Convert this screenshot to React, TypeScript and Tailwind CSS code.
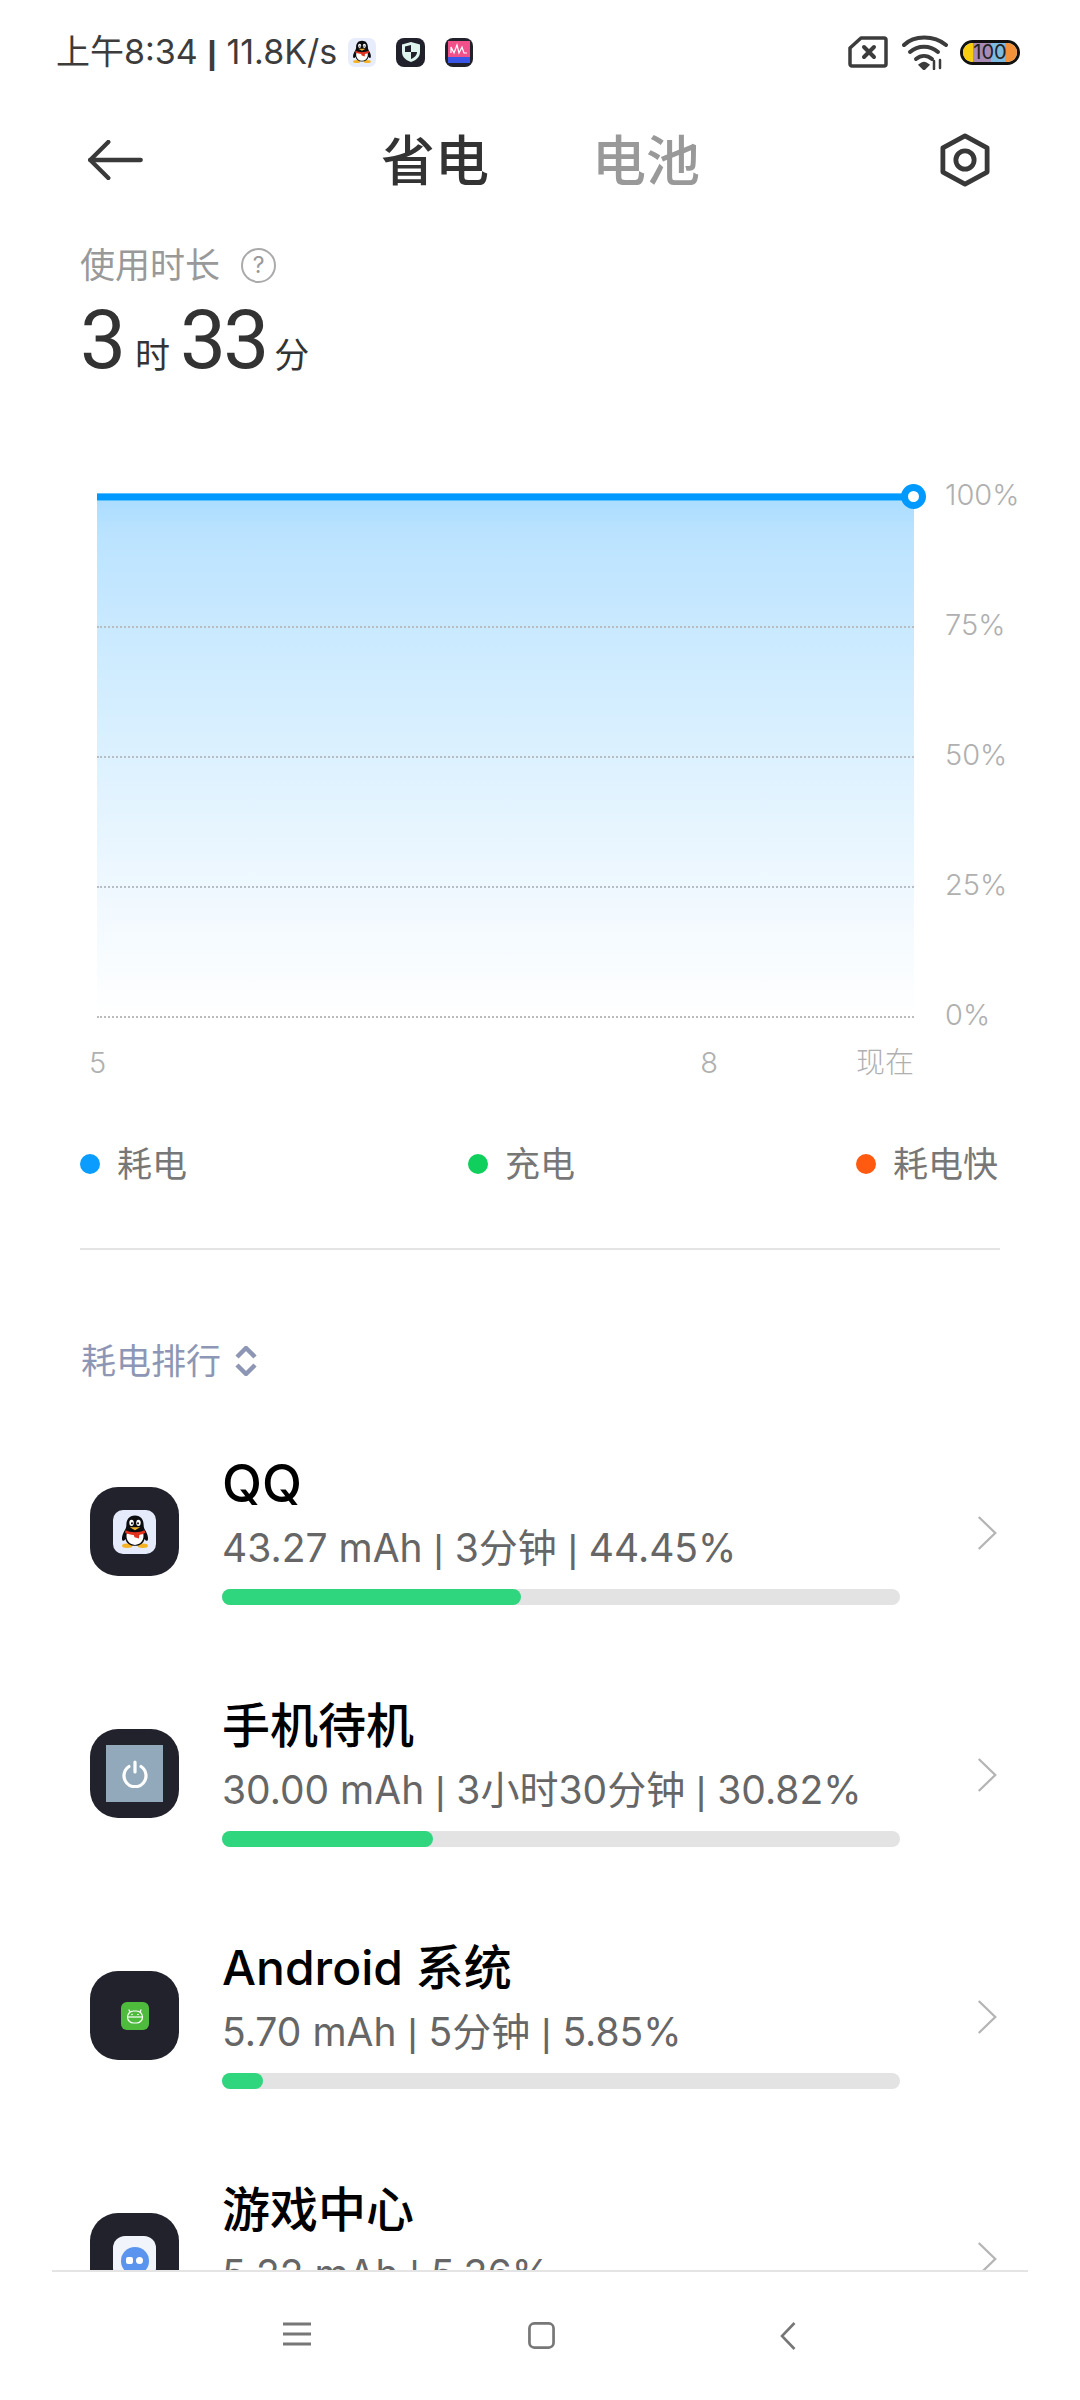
const rows = [
  { title: 'QQ', detail: ['43.27 mAh', '3分钟', '44.45%'], fill: 299, icon: 'qq', titleClass: 'text-[52px]' },
  { title: '手机待机', detail: ['30.00 mAh', '3小时30分钟', '30.82%'], fill: 211, icon: 'power', titleClass: 'text-[48px]' },
  { title: 'Android 系统', detail: ['5.70 mAh', '5分钟', '5.85%'], fill: 41, icon: 'android', titleClass: 'text-[48px]' },
  { title: '游戏中心', detail: ['5.22 mAh', '5.36%'], fill: 36, icon: 'game', titleClass: 'text-[48px]' },
];

function Penguin({ className }: { className?: string }) {
  return (
    <svg viewBox="0 0 44 44" className={className}>
      <ellipse cx="13" cy="38" rx="6" ry="2.6" fill="#f5b324" />
      <ellipse cx="31" cy="38" rx="6" ry="2.6" fill="#f5b324" />
      <path d="M22 3c-7 0-10 5-10 11 0 3-1 5-3 8-2 4-3 9-1 10 1 .6 2-.5 3-2 1 5 5 8 11 8s10-3 11-8c1 1.500 2 2.600 3 2 2-1 1-6-1-10-2-3-3-5-3-8 0-6-3-11-10-11z" fill="#0c0c10" />
      <path d="M13 22c3 2 15 2 18 0 2 5 1 14-9 15-10-1-11-10-9-15z" fill="#fff" />
      <ellipse cx="18" cy="11.500" rx="2.600" ry="3.600" fill="#fff" />
      <ellipse cx="26" cy="11.500" rx="2.600" ry="3.600" fill="#fff" />
      <circle cx="18.500" cy="12" r="1.200" fill="#111" />
      <circle cx="25.500" cy="12" r="1.200" fill="#111" />
      <path d="M16 16.500h12l-6 3.500z" fill="#f5b324" />
      <path d="M11 20c5 3 17 3 22 0l1 3c-2 1.500-5 2-7 2.500l-.5 4-5-1.500-1-2.500c-3 0-7-1-10-2.500z" fill="#e2331f" />
    </svg>
  );
}

function AppIcon({ kind }: { kind: string }) {
  return (
    <div className="mt-[77px] flex h-[89px] w-[89px] shrink-0 items-center justify-center rounded-[28px] bg-[#21222c]">
      {kind === 'qq' && (
        <div className="flex h-[44px] w-[43px] items-center justify-center rounded-[10px] bg-[#e6ebfb]">
          <Penguin className="h-[38px] w-[38px]" />
        </div>
      )}
      {kind === 'power' && (
        <div className="flex h-[57px] w-[57px] items-center justify-center bg-[#91a9bb]">
          <svg viewBox="0 0 28 28" className="h-[28px] w-[28px]" fill="none" stroke="#fff" strokeWidth="3.200" strokeLinecap="round">
            <path d="M14 2v10" />
            <path d="M8 6.500a11 11 0 1 0 12 0" />
          </svg>
        </div>
      )}
      {kind === 'android' && (
        <div className="flex h-[28px] w-[28px] items-center justify-center rounded-[6px] bg-[#4fbb3d]">
          <svg viewBox="0 0 20 20" className="h-[20px] w-[20px]" fill="none" stroke="#fff" strokeWidth="1.200">
            <path d="M5 6 3.800 3.500M15 6l1.200-2.500" />
            <rect x="2.500" y="5" width="15" height="12" rx="6" />
            <path d="M2.500 11h15" />
            <circle cx="7" cy="8.500" r=".8" fill="#fff" stroke="none" />
            <circle cx="13" cy="8.500" r=".8" fill="#fff" stroke="none" />
          </svg>
        </div>
      )}
      {kind === 'game' && (
        <div className="flex h-[44px] w-[43px] items-start justify-center rounded-[12px] bg-[#f1f4fb] pt-[11px]">
          <div className="flex h-[28px] w-[28px] items-center justify-center gap-[3px] rounded-full bg-[#5b94ee]">
            <span className="h-[7px] w-[7px] rounded-[2px] bg-white" />
            <span className="h-[7px] w-[7px] rounded-full bg-white" />
          </div>
        </div>
      )}
    </div>
  );
}

function UsageRow({ title, detail, fill, icon, titleClass }: { title: string; detail: string[]; fill: number; icon: string; titleClass: string }) {
  return (
    <div className="flex h-[242px] shrink-0 pl-[90px] pr-[82px]">
      <AppIcon kind={icon} />
      <div className="ml-[43px] w-[678px] pt-[46px]">
        <div className={`h-[56px] leading-[56px] font-medium text-black ${titleClass}`}>{title}</div>
        <div className="mt-[8px] h-[56px] text-[39px] leading-[56px] text-[#666]">
          {detail.map((part, i) => (
            <span key={part}>
              {i > 0 && (
                <>
                  {' '}
                  <span className="font-['Liberation_Sans']">|</span>{' '}
                </>
              )}
              {part}
            </span>
          ))}
        </div>
        <div className="mt-[13px] h-[16px] w-[678px] rounded-full bg-[#e3e3e3]">
          <div className="h-[16px] rounded-full bg-[#2fd67e]" style={{ width: fill }} />
        </div>
      </div>
      <svg viewBox="0 0 24 38" className="mt-[104px] ml-[76px] h-[38px] w-[24px]" fill="none" stroke="#b5b5b5" strokeWidth="2.500">
        <path d="M3 1.500 21 19 3 36.500" />
      </svg>
    </div>
  );
}

function Legend({ color, label }: { color: string; label: string }) {
  return (
    <div className="flex items-center gap-[17px]">
      <span className={`h-[20px] w-[20px] rounded-full ${color}`} />
      <span className="text-[35px] leading-[44px] text-[#777]">{label}</span>
    </div>
  );
}

export default function App() {
  return (
    <div className="flex h-[2400px] w-[1080px] flex-col overflow-hidden bg-white font-['Inter','Noto_Sans_CJK_SC',sans-serif]">
      <div className="flex h-[104px] shrink-0 items-center pl-[56px] pr-[60px]">
        <span className="text-[34px] leading-[44px] text-[#3c3c3c]">
          上午8:34 <span className="font-['Liberation_Sans'] font-bold">|</span> 11.8K/s
        </span>
        <div className="ml-[11px] flex h-[29px] w-[28px] items-center justify-center rounded-[7px] bg-[#e8edfb]">
          <Penguin className="h-[26px] w-[26px]" />
        </div>
        <div className="ml-[20px] flex h-[29px] w-[29px] items-center justify-center rounded-[8px] bg-[#20212b]">
          <svg viewBox="0 0 20 22" className="h-[22px] w-[20px]">
            <path d="M10 1 19 3.500V11c0 5-4 8.500-9 10-5-1.500-9-5-9-10V3.500z" fill="#dff6ef" />
            <path d="M10 4v7H4V5.500zM10 11h6c0 3.500-2.500 5.500-6 7z" fill="#20212b" />
          </svg>
        </div>
        <div className="ml-[20px] flex h-[29px] w-[28px] items-center justify-center rounded-[8px] bg-[#20212b]">
          <svg viewBox="0 0 22 22" className="h-[22px] w-[22px]">
            <rect width="22" height="22" fill="#f0518a" />
            <rect y="16" width="22" height="6" fill="#3a56e8" />
            <path d="M3 12V6l3 6 3-8 2 8 3-6 2 6h3" fill="none" stroke="#fff" strokeWidth="1.200" />
          </svg>
        </div>
        <svg viewBox="0 0 40 32" className="ml-auto h-[32px] w-[40px]" fill="none" stroke="#3c3c3c" strokeWidth="3.500" strokeLinejoin="round" strokeLinecap="round">
          <path d="M13 2h23a2 2 0 0 1 2 2v24a2 2 0 0 1-2 2H4a2 2 0 0 1-2-2V12z" />
          <path d="m16 11 10 10M26 11 16 21" strokeWidth="4" />
        </svg>
        <svg viewBox="0 0 46 36" className="ml-[14px] h-[36px] w-[46px]" fill="none" stroke="#3c3c3c" strokeWidth="4" strokeLinecap="round">
          <path d="M2 11C12 1 32 1 44 11" />
          <path d="M8 18c8-7 20-7 28 0" />
          <path d="M14 25c5-4 11-4 16 0" />
          <path d="M19 31c2-1.500 4-1.500 6 0l-3 3z" fill="#3c3c3c" />
          <path d="M32 27v8M38 26v8" strokeWidth="2.500" />
        </svg>
        <div className="relative ml-[12px] flex h-[25px] w-[60px] overflow-hidden rounded-full border-[3px] border-[#111]">
          <span className="w-[10px] bg-[#f7cd12]" />
          <span className="w-[18px] bg-[#a78bb5]" />
          <span className="w-[14px] bg-[#7ebbe0]" />
          <span className="w-[12px] bg-[#f4923a]" />
          <span className="absolute inset-0 text-center text-[20px] leading-[19px] text-[#222]">100</span>
        </div>
      </div>

      <div className="flex h-[112px] shrink-0 items-center justify-between pl-[86px] pr-[90px]">
        <svg viewBox="0 0 58 42" className="h-[40px] w-[58px]" fill="none" stroke="#3a3a3a" strokeWidth="4.500" strokeLinecap="round" strokeLinejoin="round">
          <path d="M56 21H3" />
          <path d="M22 2 3 21l19 19" />
        </svg>
        <div className="mt-[4px] flex gap-[103px] pr-[3px] text-[54px] leading-[64px] font-medium">
          <span className="text-[#333]">省电</span>
          <span className="text-[#999]">电池</span>
        </div>
        <svg viewBox="0 0 52 56" className="h-[54px] w-[50px]" fill="none" stroke="#383838" strokeWidth="5" strokeLinejoin="round">
          <path d="M26 3 49 15.500v25L26 53 3 40.500v-25z" />
          <circle cx="26" cy="28" r="9.500" />
        </svg>
      </div>

      <div className="mt-[24px] flex h-[50px] shrink-0 items-center pl-[80px]">
        <span className="text-[35px] leading-[50px] text-[#999]">使用时长</span>
        <span className="ml-[21px] flex h-[35px] w-[35px] items-center justify-center rounded-full border-2 border-[#aaa] text-[23px] leading-none text-[#999]">?</span>
      </div>

      <div className="mt-[12px] flex h-[76px] shrink-0 items-baseline pl-[80px] text-[#333]">
        <span className="font-['Roboto'] text-[82px] leading-[76px] tracking-[-3px]">3</span>
        <span className="ml-[12px] text-[35px] leading-[76px]">时</span>
        <span className="ml-[10px] font-['Roboto'] text-[82px] leading-[76px] tracking-[-3px]">33</span>
        <span className="ml-[8px] text-[35px] leading-[76px]">分</span>
      </div>

      <div className="mt-[115px] flex shrink-0 pl-[97px]">
        <div className="relative h-[525px] w-[817px] bg-[linear-gradient(to_bottom,#a8dcff_0%,#bbe3ff_8%,#c9e9ff_25%,#dcf1ff_50%,#eff8ff_75%,#ffffff_100%)]">
          <div className="h-[8px] border-y border-[#5ac0ff] bg-[#0099ff]" />
          <div className="h-[127px] border-b-2 border-dotted border-[#b4bec4]" />
          <div className="h-[130px] border-b-2 border-dotted border-[#b4bec4]" />
          <div className="h-[130px] border-b-2 border-dotted border-[#b4bec4]" />
          <div className="h-[130px] border-b-2 border-dotted border-[#bcbcbc]" />
          <div className="absolute -top-[9px] -right-[12px] h-[25px] w-[25px] rounded-full border-[7px] border-[#0099ff] bg-white" />
        </div>
        <div className="-mt-[18px] ml-[31px] flex h-[560px] flex-col justify-between text-[29px] leading-[40px] font-light text-[#b0b0b0]">
          <span>100%</span>
          <span>75%</span>
          <span>50%</span>
          <span>25%</span>
          <span>0%</span>
        </div>
      </div>

      <div className="mt-[8px] flex h-[40px] w-[914px] shrink-0 items-center pl-[89px] text-[29px] leading-[40px] font-light text-[#b0b0b0]">
        <span>5</span>
        <span className="ml-auto">8</span>
        <span className="ml-[138px]">现在</span>
      </div>

      <div className="mt-[59px] flex h-[44px] shrink-0 items-center justify-between pl-[80px] pr-[82px]">
        <Legend color="bg-[#0a9dff]" label="耗电" />
        <Legend color="bg-[#10cf5c]" label="充电" />
        <Legend color="bg-[#ff5a10]" label="耗电快" />
      </div>

      <div className="mx-[80px] mt-[62px] h-[2px] shrink-0 bg-[#e4e4e4]" />

      <div className="mt-[89px] flex h-[44px] shrink-0 items-center pl-[81px]">
        <span className="text-[35px] leading-[44px] text-[#8d97b5]">耗电排行</span>
        <svg viewBox="0 0 22 30" className="ml-[14px] h-[30px] w-[22px]" fill="none" stroke="#8d97b5" strokeWidth="4.500" strokeLinejoin="round">
          <path d="m2 11 9-9 9 9M2 19l9 9 9-9" />
        </svg>
      </div>

      <div className="mt-[27px] min-h-0 flex-1 overflow-hidden">
        {rows.map(row => (
          <UsageRow key={row.title} {...row} />
        ))}
      </div>

      <div className="mx-[52px] h-[2px] shrink-0 bg-[#e4e4e4]" />
      <div className="flex h-[128px] shrink-0 items-start pt-[50px] pl-[283px]">
        <svg viewBox="0 0 28 24" className="h-[24px] w-[28px]" fill="none" stroke="#777" strokeWidth="3">
          <path d="M0 2h28M0 12h28M0 22h28" />
        </svg>
        <svg viewBox="0 0 28 28" className="ml-[217px] h-[27px] w-[27px]" fill="none" stroke="#777" strokeWidth="2.800">
          <rect x="1.500" y="1.500" width="25" height="25" rx="5" />
        </svg>
        <svg viewBox="0 0 16 28" className="ml-[225px] h-[28px] w-[16px]" fill="none" stroke="#777" strokeWidth="2.600">
          <path d="M14.500 1 2 14l12.500 13" />
        </svg>
      </div>
    </div>
  );
}
